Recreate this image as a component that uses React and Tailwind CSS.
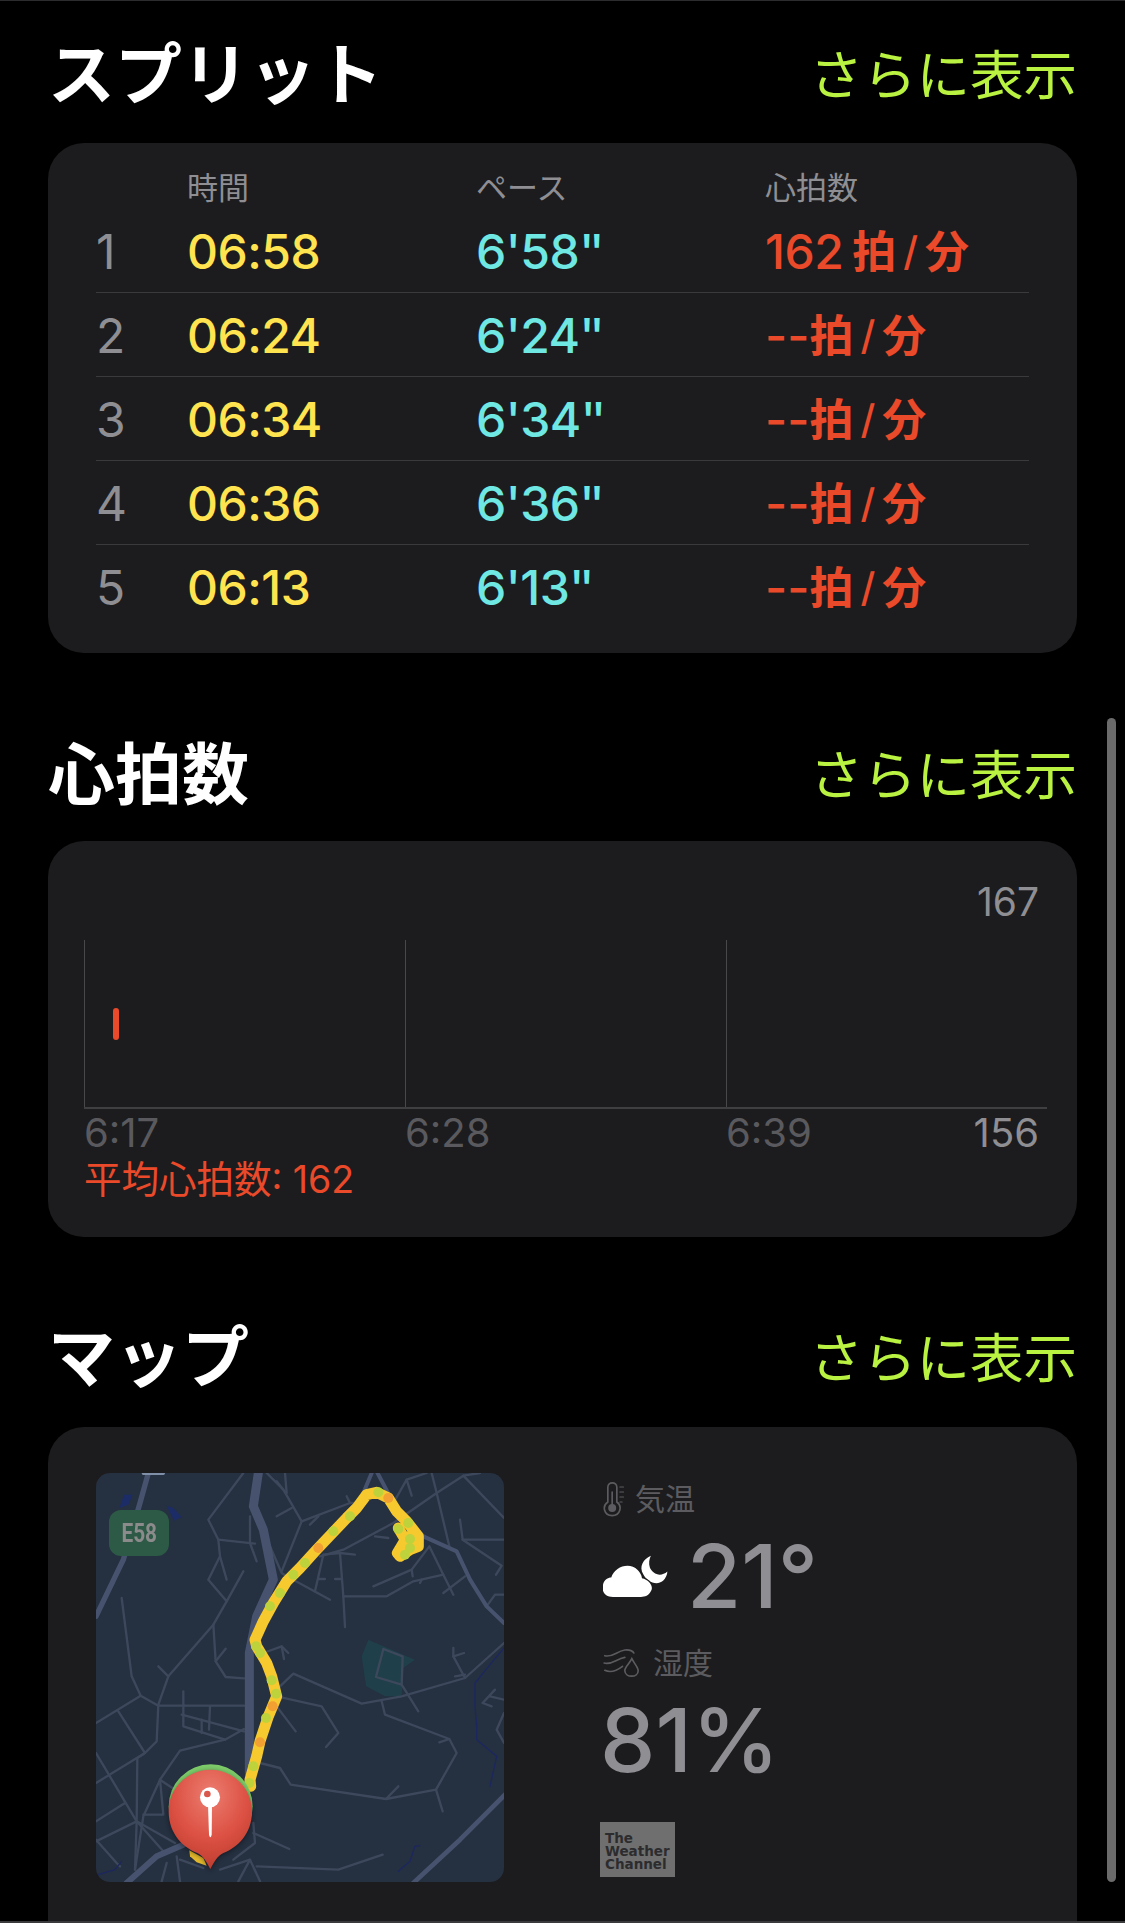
const CJK = "font-['Inter','Noto_Sans_CJK_JP',sans-serif]";

const rows = [
  ["1", "06:58", "6'58", "162", true],
  ["2", "06:24", "6'24", "--", false],
  ["3", "06:34", "6'34", "--", false],
  ["4", "06:36", "6'36", "--", false],
  ["5", "06:13", "6'13", "--", false],
];

function SectionTitle({ title, className }) {
  return (
    <div className={`flex h-[68px] items-center justify-between pt-[3px] ${className}`}>
      <h2 className="text-[67px] font-bold leading-none text-white">{title}</h2>
      <span className="pt-[3px] text-[53.5px] leading-none text-[#b9f240]">さらに表示</span>
    </div>
  );
}

function Splits() {
  return (
    <div className="rounded-[36px] bg-[#1c1c1e] px-12 pb-6 pt-[23px]">
      <div className="grid h-[43px] grid-cols-[91px_289px_289px_1fr] items-center text-[31px] leading-none text-[#8e8e93]">
        <span />
        <span>時間</span>
        <span>ペース</span>
        <span>心拍数</span>
      </div>
      {rows.map(([n, time, pace, hr, first], i) => (
        <div
          key={n}
          className={`grid h-[84px] grid-cols-[91px_289px_289px_1fr] items-center pt-[2px] text-[48px] leading-none ${
            i < 4 ? "border-b border-[#3a3a3c]" : ""
          }`}
        >
          <span className="font-normal text-[#8e8e93]">{n}</span>
          <span className="font-medium tracking-[-0.5px] text-[#ffe44f]">{time}</span>
          <span className="font-medium tracking-[-0.5px] text-[#6fe7e2]">
            {pace}
            <span className="tracking-[-5px]">''</span>
          </span>
          <span className="flex items-center font-medium text-[#ea4a2a]">
            <span className={first ? "mr-[9px] tracking-[-0.5px]" : "mr-0 tracking-[0px]"}>{hr}</span>
            <span className="text-[44px] font-bold">拍</span>
            <span className="mx-[7px] text-[40px] font-medium">/</span>
            <span className="text-[44px] font-bold">分</span>
          </span>
        </div>
      ))}
    </div>
  );
}

function Chart() {
  return (
    <div className="h-[396px] rounded-[36px] bg-[#1c1c1e] pl-9 pr-[38px] pt-[39px]">
      <div className="text-right text-[39px] leading-[44px] text-[#8e8e93]">167</div>
      <div className="relative mt-4 grid h-[169px] w-[963px] grid-cols-3 border-b-2 border-[#3f3f41]">
        <div className="border-l border-[#48484a]" />
        <div className="border-l border-[#48484a]" />
        <div className="border-l border-[#48484a]" />
        <div className="absolute left-[29px] top-[68px] h-8 w-[6px] rounded-full bg-[#ea4a2a]" />
      </div>
      <div className="mt-[2px] grid grid-cols-[321px_321px_1fr] text-[40px] leading-[44px] text-[#5a5a5e]">
        <span>6:17</span>
        <span>6:28</span>
        <span className="flex justify-between">
          6:39
          <span className="text-[#8e8e93]">156</span>
        </span>
      </div>
      <div className="mt-[3px] text-[37.5px] leading-[44px] text-[#ea4a2a]">平均心拍数: 162</div>
    </div>
  );
}

const minor = [
  "550,100 445,240 475,300 480,350 445,420 500,485 550,395",
  "475,300 585,312",
  "480,350 500,420",
  "500,485 460,555 325,710 295,795 290,905 255,940 232,955 230,1145 225,1290",
  "460,555 467,665 497,712 552,716",
  "467,665 497,627",
  "185,475 215,710 242,768 295,798 552,798",
  "295,680 325,710",
  "242,768 108,850",
  "175,815 255,940 108,1030",
  "108,940 230,1145 345,1210",
  "370,755 370,860 495,900 552,868",
  "365,825 552,875",
  "450,800 447,870",
  "425,840 425,880",
  "495,900 360,933 300,1020 250,1130 225,1290",
  "300,1020 345,1050",
  "300,1020 310,1125 250,1125",
  "108,1145 195,1090",
  "108,1205 230,1145",
  "108,1200 170,1270 180,1280",
  "230,1145 310,1235",
  "350,1250 360,1325",
  "360,1260 430,1285",
  "320,1270 305,1325",
  "480,1290 570,1260 600,1325",
  "590,1280 835,1290 968,1245",
  "570,1260 535,1325",
  "580,1180 688,1228",
  "580,1150 585,1210 520,1260",
  "600,970 660,985 692,1035 978,1078 1128,1050 1190,940 1168,898 975,825 965,785",
  "978,1078 1015,1040",
  "1128,1050 1148,1115",
  "1168,898 1138,908",
  "650,770 785,800 835,880 798,922",
  "650,800 707,875",
  "660,740 700,702 905,792 1025,770 1215,715 1332,610",
  "1215,715 1180,650 1180,625",
  "1180,650 1212,640",
  "1215,705 1185,710",
  "1025,735 1075,815",
  "1025,735 948,712 970,628 1028,650 1025,735",
  "610,640 665,620 685,640",
  "665,620 672,658",
  "620,100 670,150 725,245 665,395",
  "675,100 680,160",
  "650,125 670,150",
  "650,230 695,205",
  "725,245 870,190 905,190",
  "860,170 870,190",
  "750,255 775,230",
  "630,320 665,400 680,410 810,480",
  "570,230 570,310 590,365",
  "790,345 765,455",
  "790,345 840,340 850,470 855,562",
  "840,340 885,345",
  "775,418 795,418",
  "825,418 845,418",
  "850,470 980,470 1060,425 1150,405 1180,465",
  "1150,405 1108,320 1055,390 940,440",
  "1055,390 1058,410",
  "1150,460 1215,410",
  "1080,430 1085,420",
  "780,350 850,330 1000,250 1130,160 1210,108 1260,100",
  "1210,108 1332,235",
  "1115,100 1130,160 1168,320",
  "1000,190 1040,120 1055,168",
  "1040,120 1100,100",
  "1200,240 1208,300 1332,300",
  "1208,300 1325,378 1308,405",
  "945,290 985,295",
  "1280,500 1305,465 1332,465",
  "1332,820 1310,870 1332,910",
  "1268,790 1305,750",
  "1268,790 1295,800",
  "1290,770 1332,780",
];

const route =
  "572,1040 570,1020 590,950 600,905 625,830 650,770 635,710 620,670 590,620 585,600 610,545 640,490 680,425 720,385 770,330 860,235 890,205 920,165 950,158 985,175 1010,215 1040,245 1075,290 1075,320 1050,330 1020,350 1012,340 1030,310 1060,295 1030,290 1015,265";

const greenDots = [
  [568,1030],[580,980],[618,835],[648,762],[635,722],[600,640],[588,620],[630,500],[660,460],[700,405],[735,370],[820,275],[870,230],[955,158],[1045,250],[1015,268],[1050,298],[1035,345],[1050,325],
];
const orangeDots = [
  [985,175],[775,325],[638,800],[600,908],
];

function MapView() {
  return (
    <div className="relative h-[409px] w-[408px] shrink-0 overflow-hidden rounded-[14px] bg-[#253040]">
      <svg viewBox="108 100 1224 1227" className="block h-full w-full" fill="none" strokeLinejoin="round" strokeLinecap="round">
        <polygon points="925,600 1065,660 1030,685 1025,770 975,770 918,740 905,650" fill="#1f3f4a" />
        <g stroke="#3d485c" strokeWidth="7">
          {minor.map((p) => (
            <polyline key={p} points={p} />
          ))}
        </g>
        <g stroke="#47536e">
          <polyline points="265,100 240,190 190,360 108,530" strokeWidth="16" />
          <polyline points="595,100 580,200 610,270 640,420 590,530 568,640 568,1000" strokeWidth="27" />
          <polyline points="200,1330 290,1250 370,1215" strokeWidth="18" />
          <polyline points="1060,1330 1200,1200 1340,1060" strokeWidth="14" />
          <polyline points="950,95 1000,190 1090,290 1190,335 1230,420 1280,500 1332,550" strokeWidth="12" />
          <polyline points="935,100 910,160" strokeWidth="12" />
        </g>
        <polyline points="250,101 310,101" stroke="#7f8fa8" strokeWidth="10" />
        <g stroke="#1c2760" strokeWidth="4">
          <polyline points="1332,625 1290,675 1245,730 1245,800 1250,860 1250,900 1310,950 1290,1040" />
          <polyline points="1015,1295 1050,1265 1065,1220 1080,1218" />
          <polyline points="115,1305 165,1290 185,1265" />
        </g>
        <polygon points="192,165 218,165 205,195 178,205" fill="#1c2c66" />
        <polygon points="320,198 340,205 365,232 342,243" fill="#1c2c66" />
        <polyline points={route} stroke="#f6c92f" strokeWidth="33" />
        {greenDots.map(([x, y]) => (
          <circle key={`${x}-${y}`} cx={x} cy={y} r="15" fill="#bed23c" />
        ))}
        {orangeDots.map(([x, y]) => (
          <circle key={`${x}-${y}`} cx={x} cy={y} r="15" fill="#f2a032" />
        ))}
        <polygon points="388,1232 430,1255 440,1278 410,1268 390,1250" fill="#e2b82c" />
        <defs>
          <radialGradient id="pinFill" cx="0.5" cy="0.25" r="0.8">
            <stop offset="0" stopColor="#ec7d70" />
            <stop offset="0.55" stopColor="#dc5143" />
            <stop offset="1" stopColor="#b83a2c" />
          </radialGradient>
        </defs>
        <circle cx="452" cy="1100" r="126" fill="#7dcb69" />
        <path
          d="M451 990 C520 990 576 1046 576 1115 C576 1185 530 1225 490 1240 C472 1248 462 1268 451 1288 C440 1268 430 1248 412 1240 C372 1225 326 1185 326 1115 C326 1046 382 990 451 990 Z"
          fill="url(#pinFill)"
          className="drop-shadow-[0_4px_8px_rgba(0,0,0,0.45)]"
        />
        <circle cx="450" cy="1073" r="30" fill="#fff" />
        <circle cx="442" cy="1063" r="10" fill="#d9584b" />
        <path d="M444 1095 L456 1095 L455 1185 Q451 1200 447 1185 Z" fill="#fff" />
      </svg>
      <div className="absolute left-[13px] top-[37px] flex h-[46px] w-[60px] items-center justify-center rounded-[12px] bg-[#2d5a46]">
        <span className="inline-block scale-x-[0.8] font-['Roboto'] text-[26px] font-bold leading-none text-[#8b8b8b]">E58</span>
      </div>
    </div>
  );
}

function Cloud() {
  return (
    <svg viewBox="100 310 200 130" className="h-[43px] w-[66px] shrink-0" fill="#fff">
      <path d="M245 312 C222 322 208 345 222 368 C232 390 262 405 282 388 C290 380 295 370 295 360 C275 378 250 368 242 348 C238 335 240 322 245 312 Z" />
      <path
        d="M130 437 C105 437 95 420 100 400 C103 385 115 378 125 378 C135 345 180 330 205 355 C215 365 218 375 218 380 C240 385 255 405 245 420 C238 433 228 437 215 437 Z"
        stroke="#1c1c1e"
        strokeWidth="7"
        paintOrder="stroke"
      />
    </svg>
  );
}

function Thermo() {
  return (
    <svg viewBox="100 100 65 105" className="h-[35px] w-[22px] shrink-0" fill="none" stroke="#5c5c60" strokeWidth="5" strokeLinecap="round">
      <path d="M114 160 V116 C114 98 141 98 141 116 V160 C158 172 152 201 127 201 C102 201 96 172 114 160 Z" />
      <circle cx="127" cy="178" r="12" fill="#5c5c60" stroke="none" />
      <path d="M127 178 V130" />
      <path d="M150 115 H161 M150 130 H161 M150 145 H161 M150 160 H157" strokeWidth="3.5" />
    </svg>
  );
}

function Humidity() {
  return (
    <svg viewBox="100 600 110 90" className="h-[30px] w-[37px] shrink-0" fill="none" stroke="#5c5c60" strokeWidth="5" strokeLinecap="round">
      <path d="M105 623 C125 630 140 610 165 606 C180 604 190 610 192 615" />
      <path d="M103 645 C125 652 140 632 165 628" />
      <path d="M105 667 C125 676 145 665 158 655" />
      <path d="M186 632 C178 648 164 658 165 668 C166 690 205 690 205 668 C205 658 194 648 186 632 Z" />
    </svg>
  );
}

function Weather() {
  return (
    <div className="ml-[99px] mt-2 flex flex-col">
      <div className="flex h-9 items-center gap-[10px] text-[30px] leading-none text-[#5c5c60]">
        <Thermo />
        <span>気温</span>
      </div>
      <div className="mt-[15px] flex h-[88px] items-center gap-[18px]">
        <Cloud />
        <span className="text-[88px] font-medium leading-none text-[#8e8e93]">21°</span>
      </div>
      <div className="mt-[25px] flex h-9 items-center gap-[13px] text-[30px] leading-none text-[#5c5c60]">
        <Humidity />
        <span>湿度</span>
      </div>
      <div className="-ml-[3px] mt-[15px] flex h-[88px] items-center text-[88px] font-medium leading-none text-[#8e8e93]">81%</div>
      <div className="-ml-[3px] mt-[38px] flex h-[55px] w-[75px] flex-col justify-center bg-[#6f6f6f] pl-[5px] pt-[4px] font-['DejaVu_Sans'] text-[13.5px] font-bold leading-[13px] text-[#2c2c2e]">
        <span>The</span>
        <span>Weather</span>
        <span>Channel</span>
      </div>
    </div>
  );
}

export default function App() {
  return (
    <div className={`relative h-[1923px] w-[1125px] overflow-hidden border-t border-[#2c2c2e] bg-black px-12 pt-[38px] ${CJK}`}>
      <SectionTitle title="スプリット" className="mb-9" />
      <Splits />
      <SectionTitle title="心拍数" className="mb-[34px] mt-[86px]" />
      <Chart />
      <SectionTitle title="マップ" className="mb-[37px] mt-[85px]" />
      <div className="flex h-[600px] rounded-[36px] bg-[#1c1c1e] pl-12 pt-[46px]">
        <MapView />
        <Weather />
      </div>
      <div className="absolute right-[9px] top-[717px] h-[1164px] w-[9px] rounded-full bg-[#6b6b6b]" />
      <div className="absolute inset-x-0 bottom-0 h-[2px] bg-[#3a3a3c]" />
    </div>
  );
}
